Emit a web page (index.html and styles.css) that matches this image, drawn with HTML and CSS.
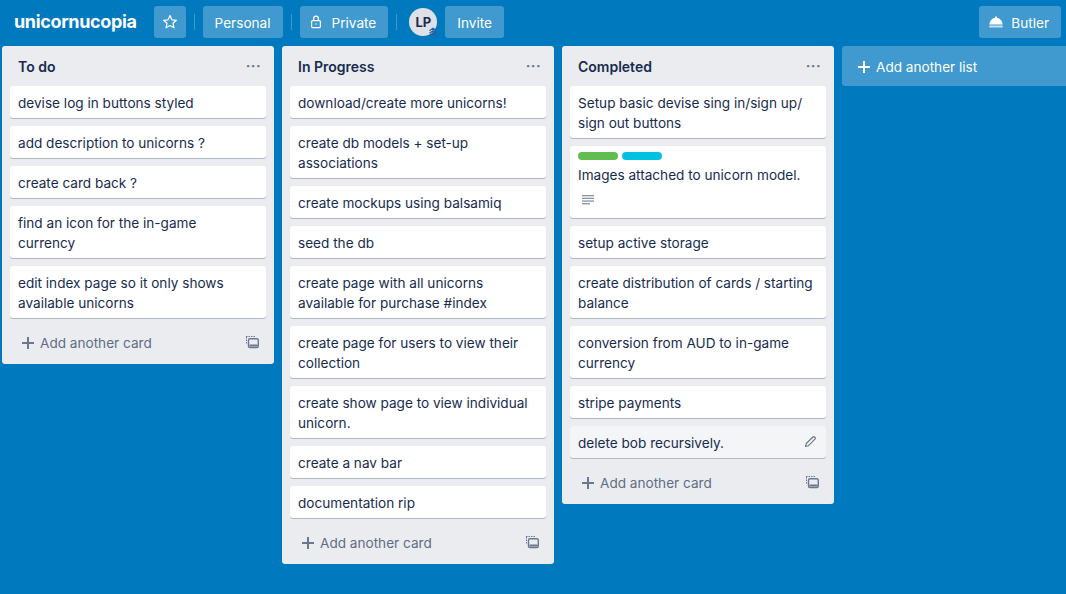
FILE: index.html
```html
<!DOCTYPE html>
<html lang="en">
<head>
    <meta charset="UTF-8">
    <meta name="viewport" content="width=device-width, initial-scale=1.0">
    <title>unicornucopia</title>
    <link rel="stylesheet" href="styles.css">
</head>
<body>

<header class="board-header">
    <h1 class="board-name">unicornucopia</h1>
    <a class="btn btn-icon">
        <svg width="16" height="16" viewBox="0 0 16 16" fill="none" stroke="#fff" stroke-width="1.2" stroke-linejoin="round"><path d="M8 1.600l1.900 4.200 4.500.5-3.400 3 1 4.500L8 11.500l-4 2.300 1-4.500-3.400-3 4.500-.5z"/></svg>
    </a>
    <span class="sep"></span>
    <a class="btn">Personal</a>
    <span class="sep"></span>
    <a class="btn btn-private">
        <svg class="btn-svg" width="14" height="14" viewBox="0 0 14 14" fill="none" stroke="#fff" stroke-width="1.200"><rect x="2.600" y="5.600" width="8.800" height="7" rx="1"/><path d="M4.600 5.600V3.600a2.400 2.400 0 0 1 4.800 0v2"/><circle cx="7" cy="9" r=".7" fill="#fff" stroke="none"/></svg>
        Private
    </a>
    <span class="sep"></span>
    <div class="avatar">
        LP
        <svg class="avatar-badge" width="10" height="10" viewBox="0 0 10 10" fill="none" stroke="#2a5ea8" stroke-width="1.300"><path d="M1.500 3.800L5 1.200l3.500 2.600M1.500 6.300L5 3.700l3.500 2.600M1.500 8.800L5 6.200l3.500 2.600"/></svg>
    </div>
    <a class="btn">Invite</a>
    <a class="btn btn-right">
        <svg class="btn-svg" width="16" height="16" viewBox="0 0 16 16" fill="#fff"><circle cx="8" cy="3.200" r="1"/><path d="M1.400 10.400C1.700 6.600 4.400 3.800 8 3.800s6.300 2.800 6.600 6.600z"/><rect x="1.200" y="11.600" width="13.600" height="2" rx=".6" opacity=".7"/></svg>
        Butler
    </a>
</header>

<main class="board">
    <section class="list">
        <div class="list-header"><h2>To do</h2><span class="dots">···</span></div>
        <div class="card">devise log in buttons styled</div>
        <div class="card">add description to unicorns ?</div>
        <div class="card">create card back ?</div>
        <div class="card">find an icon for the in-game currency</div>
        <div class="card">edit index page so it only shows available unicorns</div>
        <div class="list-footer">
            <span class="plus"></span>Add another card
            <svg class="template" width="14" height="14" viewBox="0 0 14 14" fill="none" stroke="#6b778c"><path d="M1 1.500h9" stroke-dasharray="1.500 1"/><path d="M1.500 2v7" stroke-dasharray="1.500 1"/><rect x="3.500" y="3.700" width="9.800" height="8.800" rx="1.500" stroke-width="1.400"/><rect x="4.500" y="9.500" width="8" height="2" fill="#6b778c" stroke="none"/></svg>
        </div>
    </section>

    <section class="list">
        <div class="list-header"><h2>In Progress</h2><span class="dots">···</span></div>
        <div class="card">download/create more unicorns!</div>
        <div class="card">create db models + set-up associations</div>
        <div class="card">create mockups using balsamiq</div>
        <div class="card">seed the db</div>
        <div class="card">create page with all unicorns available for purchase #index</div>
        <div class="card">create page for users to view their collection</div>
        <div class="card">create show page to view individual unicorn.</div>
        <div class="card">create a nav bar</div>
        <div class="card">documentation rip</div>
        <div class="list-footer">
            <span class="plus"></span>Add another card
            <svg class="template" width="14" height="14" viewBox="0 0 14 14" fill="none" stroke="#6b778c"><path d="M1 1.500h9" stroke-dasharray="1.500 1"/><path d="M1.500 2v7" stroke-dasharray="1.500 1"/><rect x="3.500" y="3.700" width="9.800" height="8.800" rx="1.500" stroke-width="1.400"/><rect x="4.500" y="9.500" width="8" height="2" fill="#6b778c" stroke="none"/></svg>
        </div>
    </section>

    <section class="list">
        <div class="list-header"><h2>Completed</h2><span class="dots">···</span></div>
        <div class="card">Setup basic devise sing in/sign up/ sign out buttons</div>
        <div class="card card-detail">
            <div class="labels"><span class="label label-green"></span><span class="label label-sky"></span></div>
            Images attached to unicorn model.
            <svg class="desc-icon" width="14" height="12" viewBox="0 0 14 12" fill="#8993a4"><rect x="1" y="1" width="12" height="1.300"/><rect x="1" y="3.700" width="12" height="1.300"/><rect x="1" y="6.400" width="12" height="1.300"/><rect x="1" y="9.100" width="8" height="1.300"/></svg>
        </div>
        <div class="card">setup active storage</div>
        <div class="card">create distribution of cards / starting balance</div>
        <div class="card">conversion from AUD to in-game currency</div>
        <div class="card">stripe payments</div>
        <div class="card card-hover">
            delete bob recursively.
            <svg class="pencil" width="13" height="13" viewBox="0 0 13 13" fill="none" stroke="#6b778c" stroke-width="1.100" stroke-linejoin="round"><path d="M1.500 11.500l.8-3L8.800 2a1.200 1.200 0 0 1 1.700 0l.5.500a1.200 1.200 0 0 1 0 1.700L4.500 10.700z"/></svg>
        </div>
        <div class="list-footer">
            <span class="plus"></span>Add another card
            <svg class="template" width="14" height="14" viewBox="0 0 14 14" fill="none" stroke="#6b778c"><path d="M1 1.500h9" stroke-dasharray="1.500 1"/><path d="M1.500 2v7" stroke-dasharray="1.500 1"/><rect x="3.500" y="3.700" width="9.800" height="8.800" rx="1.500" stroke-width="1.400"/><rect x="4.500" y="9.500" width="8" height="2" fill="#6b778c" stroke="none"/></svg>
        </div>
    </section>

    <div class="add-list"><span class="plus plus-white"></span>Add another list</div>
</main>

</body>
</html>
```
FILE: styles.css
```css
* {
    box-sizing: border-box;
}

html, body {
    height: 100%;
}

body {
    font-family: Inter, "Noto Sans", sans-serif;
    font-size: 13.6px;
    line-height: 20px;
    color: #172b4d;
    background-color: #0079bf;
    margin: 0;
    overflow: hidden;
}

.board-header {
    display: flex;
    align-items: center;
    height: 44px;
    padding: 6px 5px 6px 14px;
}

.board-name {
    margin: 0 17px 0 0;
    font-size: 18px;
    font-weight: 700;
    line-height: 32px;
    letter-spacing: -0.35px;
    color: #fff;
}

.btn {
    display: flex;
    align-items: center;
    height: 32px;
    padding: 2px 12px 0;
    border-radius: 3px;
    background-color: rgba(255, 255, 255, 0.25);
    color: #fff;
}

.btn-icon {
    width: 32px;
    padding: 0;
    justify-content: center;
}

.btn-svg {
    margin-right: 7px;
    margin-top: -2px;
}

.btn-private {
    padding-left: 9px;
}

.btn-private .btn-svg {
    margin-right: 9px;
}

.btn-right {
    margin-left: auto;
    padding-left: 9px;
}

.sep {
    width: 1px;
    height: 16px;
    margin: 0 8px;
    background-color: rgba(255, 255, 255, 0.24);
}

.avatar {
    position: relative;
    display: flex;
    align-items: center;
    justify-content: center;
    width: 28px;
    height: 28px;
    margin: 0 8px 0 4px;
    border-radius: 50%;
    background-color: #dfe1e6;
    font-size: 13px;
    font-weight: 700;
}

.avatar-badge {
    position: absolute;
    right: -1px;
    bottom: -1px;
}

.board {
    display: flex;
    align-items: flex-start;
    gap: 8px;
    padding: 2px 0 0 2px;
}

.list {
    flex: 0 0 272px;
    padding: 0 8px;
    border-radius: 3px;
    background-color: #ebecf0;
}

.list-header {
    display: flex;
    align-items: center;
    justify-content: space-between;
    height: 40px;
    padding: 2px 5px 0 8px;
}

.list-header h2 {
    margin: 0;
    font-size: 14px;
    font-weight: 600;
    line-height: 20px;
}

.dots {
    font-size: 14px;
    font-weight: 700;
    letter-spacing: 0.4px;
    line-height: 16px;
    margin-top: -2px;
    color: #6b778c;
}

.card {
    position: relative;
    margin-bottom: 8px;
    padding: 7px 10px 5px 8px;
    border-radius: 3px;
    background-color: #fff;
    box-shadow: 0 1px 0 rgba(9, 30, 66, 0.25);
}

.card-hover {
    background-color: #f4f5f7;
}

.labels {
    display: flex;
    gap: 4px;
    margin-top: -1px;
    margin-bottom: 5px;
}

.label {
    width: 40px;
    height: 8px;
    border-radius: 4px;
}

.label-green {
    background-color: #61bd4f;
}

.label-sky {
    background-color: #00c2e0;
}

.desc-icon {
    display: block;
    margin: 9px 0 7px 3px;
}

.pencil {
    position: absolute;
    top: 9px;
    right: 9px;
}

.list-footer {
    position: relative;
    display: flex;
    align-items: center;
    height: 36px;
    margin-top: -1px;
    margin-bottom: 3px;
    padding: 0 0 0 12px;
    color: #5e6c84;
}

.plus {
    position: relative;
    width: 12px;
    height: 12px;
    margin-right: 6px;
    flex: none;
}

.plus::before,
.plus::after {
    content: "";
    position: absolute;
    background-color: #6b778c;
}

.plus::before {
    left: 0;
    right: 0;
    top: 5px;
    height: 1.5px;
}

.plus::after {
    top: 0;
    bottom: 0;
    left: 5px;
    width: 1.5px;
}

.plus-white::before,
.plus-white::after {
    background-color: #fff;
}

.template {
    position: absolute;
    top: 10px;
    right: 7px;
}

.add-list {
    flex: 0 0 272px;
    display: flex;
    align-items: center;
    height: 40px;
    padding: 2px 0 0 16px;
    border-radius: 3px;
    background-color: rgba(255, 255, 255, 0.25);
    color: #fff;
}
```
